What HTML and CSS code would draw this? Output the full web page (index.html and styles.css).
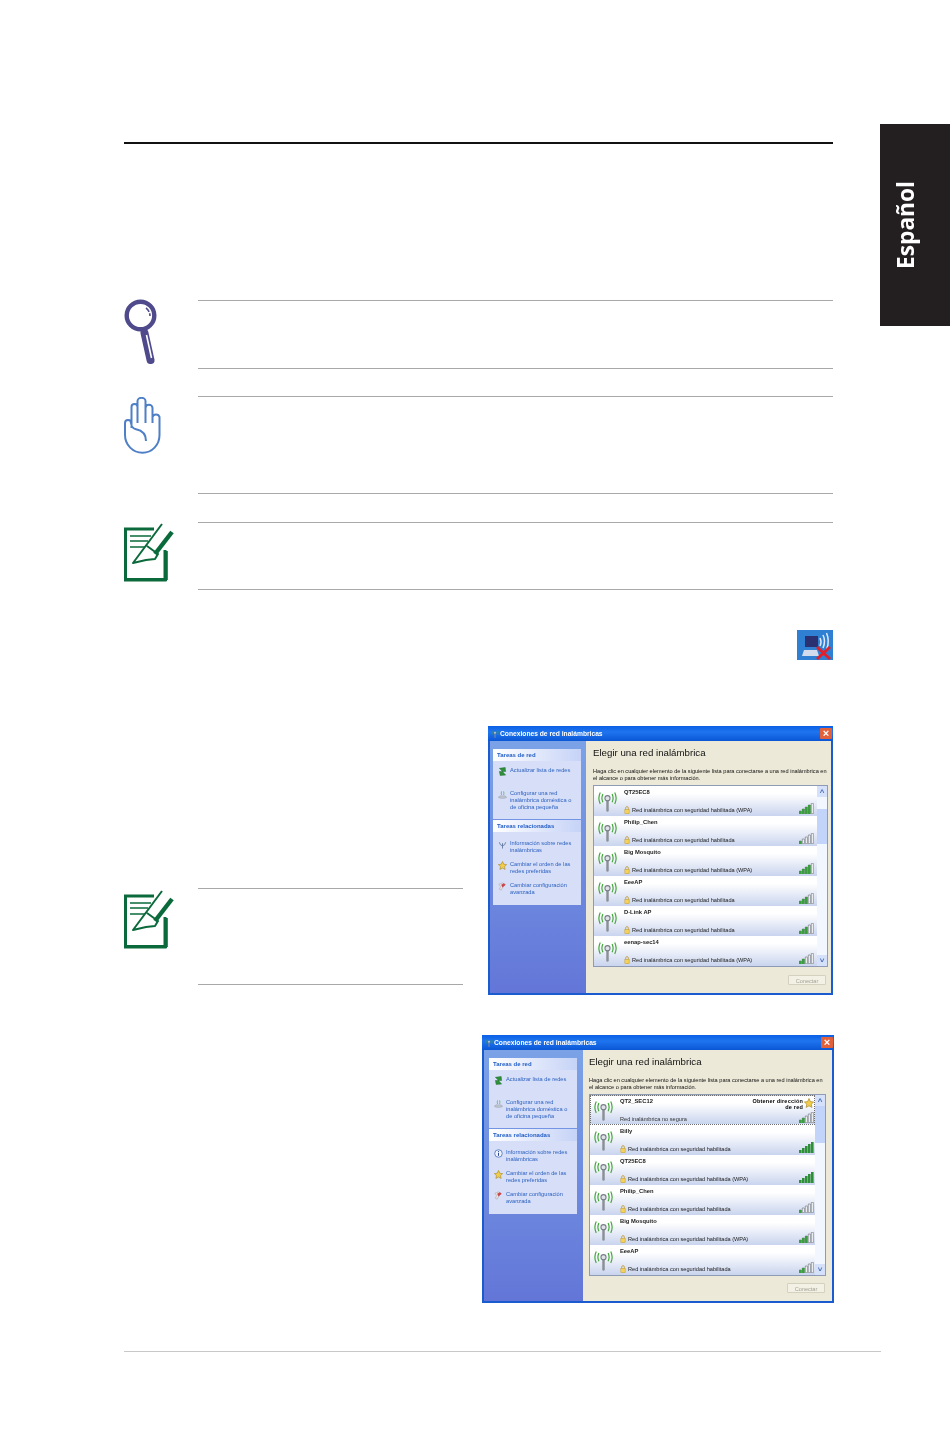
FILE: index.html
```html
<!DOCTYPE html>
<html lang="es">
<head>
    <meta charset="UTF-8">
    <meta name="viewport" content="width=device-width, initial-scale=1.0">
    <title>Conexiones de red inalámbricas</title>
    <link rel="stylesheet" href="styles.css">
</head>
<body>
    <!-- shared little icons -->
    <svg class="defs" width="0" height="0" aria-hidden="true">
        <symbol id="antenna" viewBox="0 0 20 22">
            <path d="M10 8V20.5" fill="none" stroke="#8b9097" stroke-width="2.6" stroke-linecap="round"/>
            <circle cx="10" cy="7.5" r="2.7" fill="#dfe3e8" stroke="#777d85" stroke-width="1.1"/>
            <path d="M5.2 3.2Q3 7.5 5.2 11.8M2.4 1.5Q-.6 7.5 2.4 13.5M14.8 3.2Q17 7.5 14.8 11.8M17.6 1.5Q20.6 7.5 17.6 13.5" fill="none" stroke="#3fa535" stroke-width="1.2"/>
        </symbol>
        <symbol id="lock" viewBox="0 0 6 9">
            <path d="M1.5 4V2.2a1.5 1.5 0 0 1 3 0V4" fill="none" stroke="#c09a35" stroke-width=".9"/>
            <rect x=".6" y="3.8" width="4.8" height="4.8" fill="#f5d35a" stroke="#c09a35" stroke-width=".6"/>
        </symbol>
        <symbol id="bars" viewBox="0 0 15 11">
            <path d="M.3 8h2v2.7h-2zM3.3 6h2v4.7h-2zM6.3 4h2v6.7h-2zM9.3 2h2v8.700h-2zM12.3.3h2v10.4h-2z" fill="#fff" stroke="#777d84" stroke-width=".7"/>
        </symbol>
        <symbol id="sig1" viewBox="0 0 15 11"><use href="#bars"/><path d="M0 8h2.6v3H0z" fill="#3c9c40"/></symbol>
        <symbol id="sig2" viewBox="0 0 15 11"><use href="#bars"/><path d="M0 8h2.6v3H0zM3 6h2.6v5H3z" fill="#3c9c40"/></symbol>
        <symbol id="sig3" viewBox="0 0 15 11"><use href="#bars"/><path d="M0 8h2.6v3H0zM3 6h2.6v5H3zM6 4h2.6v7H6z" fill="#3c9c40"/></symbol>
        <symbol id="sig4" viewBox="0 0 15 11"><use href="#bars"/><path d="M0 8h2.6v3H0zM3 6h2.6v5H3zM6 4h2.6v7H6zM9 2h2.6v9H9z" fill="#3c9c40"/></symbol>
        <symbol id="sig5" viewBox="0 0 15 11"><path d="M0 8h2.6v3H0zM3 6h2.6v5H3zM6 4h2.6v7H6zM9 2h2.6v9H9zM12 0h2.6v11H12z" fill="#2f8f38"/></symbol>
        <symbol id="star" viewBox="0 0 10 10">
            <path d="M5 .5 6.4 3.6 9.6 4 7.2 6.2 7.9 9.4 5 7.8 2.1 9.4 2.8 6.2.4 4 3.6 3.6z" fill="#f3cd4a" stroke="#a98a2b" stroke-width=".7"/>
        </symbol>
        <symbol id="refresh" viewBox="0 0 9 10">
            <path d="M1 1.5 7.5 .5 8 5 4.5 5 8 9 2 9.5 1 5 4.5 5z" fill="#2f8f3a" stroke="#1d6a2a" stroke-width=".5"/>
        </symbol>
        <symbol id="setup" viewBox="0 0 10 10">
            <path d="M.5 8.2C3 9.6 7 9.6 9.5 8.2L8 6.6H2z" fill="#c7ccd4" stroke="#7d8794" stroke-width=".5"/>
            <path d="M4 1.5Q3.2 3.5 4 5.5M6.2 1.5Q7 3.5 6.2 5.5" fill="none" stroke="#4da045" stroke-width=".7"/>
        </symbol>
        <symbol id="signal-info" viewBox="0 0 10 10">
            <path d="M5 3.5V9.5M1.5 2.5Q2 6 5 6.5Q8 6 8.5 2.5" fill="none" stroke="#5a6f96" stroke-width=".9"/>
        </symbol>
        <symbol id="info" viewBox="0 0 10 10">
            <circle cx="5" cy="5" r="4.2" fill="#eef3ff" stroke="#4a70b8" stroke-width=".9"/>
            <path d="M5 4.2V7.6M5 2.2V3.2" stroke="#23468f" stroke-width="1.1"/>
        </symbol>
        <symbol id="tools" viewBox="0 0 10 10">
            <path d="M1 2.5 5 1 8 3 5.5 5.5 3.5 9 1.5 8 3 5z" fill="#ebe6e4" stroke="#9a8f96" stroke-width=".5"/>
            <path d="M3.5 3 6.5 1.5 8.5 3 5 6z" fill="#c8484f"/>
        </symbol>
        <symbol id="doc-pen" viewBox="0 0 50 60">
            <path d="M41 27V57H1.500V6H30" fill="none" stroke="#0b6a3b" stroke-width="3"/>
            <path d="M42 28V57" stroke="#0b6a3b" stroke-width="3.600"/>
            <path d="M2 56.500H43" stroke="#0b6a3b" stroke-width="3"/>
            <path d="M6 13H27M6 18H24M6 24H21" stroke="#0b6a3b" stroke-width="1.300" fill="none"/>
            <path d="M38 1 9 40 22 37 31 36 34 31 23 23" fill="none" stroke="#0b6a3b" stroke-width="2" stroke-linejoin="round"/>
            <path d="M48 9 31 31" stroke="#0b6a3b" stroke-width="4.400"/>
        </symbol>
    </svg>

    <div class="tab"><span class="tab-label">Español</span></div>

    <div class="page">
        <hr class="top-rule">

        <div class="note note-first">
            <svg class="note-icon icon-loupe" viewBox="0 0 33 66">
                <circle cx="16.500" cy="16.500" r="13.800" fill="none" stroke="#4f4a8b" stroke-width="4.400"/>
                <path d="M22 9A10 10 0 0 1 26 17" fill="none" stroke="#4f4a8b" stroke-width="1.600" stroke-dasharray="5 1.400"/>
                <path d="M20.500 34 26.500 61" stroke="#4f4a8b" stroke-width="8" stroke-linecap="round"/>
                <path d="M22.500 36 27.500 59" stroke="#fff" stroke-width="1.600"/>
            </svg>
            <div class="note-body body-sm"></div>
        </div>

        <div class="note note-next">
            <svg class="note-icon icon-hand" viewBox="0 0 37 57">
                <path d="M7.500 31V10a3 3 0 0 1 6 0V4a4 3.200 0 0 1 8 0V11a3.400 3.200 0 0 1 7 0V20a3.600 3.400 0 0 1 7 0V38C35.500 48 28 55.800 18.500 55.800S1 48 1 38V26a3 3 0 0 1 6 0c.5 4 1.500 5.600 5 6.300 6 1.200 10 4.700 10 11.700M13.500 10V26M21.500 8V26M28.500 14V26" fill="none" stroke="#4f7fc6" stroke-width="2" stroke-linejoin="round"/>
            </svg>
            <div class="note-body body-lg"></div>
        </div>

        <div class="note note-last">
            <svg class="note-icon icon-doc"><use href="#doc-pen"/></svg>
            <div class="note-body body-last"></div>
        </div>

        <div class="tray-row">
            <svg class="tray-icon" width="36" height="30" viewBox="0 0 36 30">
                <rect width="36" height="30" fill="#2f80d2"/>
                <rect x="8" y="6" width="13" height="11" fill="#2b3170"/>
                <path d="M7 20H20L22 26H5z" fill="#d3dcec"/>
                <path d="M23 8Q25 12 23 16M26 5Q29 11 26 18M29.500 3Q33 11 29.500 20" fill="none" stroke="#dfe8fa" stroke-width="1.500"/>
                <path d="M20 17 33 29M33 17 20 29" stroke="#e0202a" stroke-width="2.800"/>
            </svg>
        </div>

        <div class="setup-row setup-row-first">
            <div class="setup-side">
                <div class="note">
                    <svg class="note-icon icon-doc icon-doc-low"><use href="#doc-pen"/></svg>
                    <div class="note-body body-side"></div>
                </div>
            </div>

            <div class="win win-a">
                <div class="win-title">
                    <svg class="win-logo" width="10" height="8"><use href="#antenna"/></svg>
                    <span>Conexiones de red inalámbricas</span>
                    <span class="win-close">×</span>
                </div>
                <div class="win-inner">
                    <div class="side">
                        <div class="panel">
                            <div class="panel-head">Tareas de red</div>
                            <div class="panel-list panel-list-wide">
                                <div class="task"><svg class="task-icon"><use href="#refresh"/></svg><span>Actualizar lista de redes</span></div>
                                <div class="task"><svg class="task-icon"><use href="#setup"/></svg><span>Configurar una red inalámbrica doméstica o de oficina pequeña</span></div>
                            </div>
                        </div>
                        <div class="panel">
                            <div class="panel-head">Tareas relacionadas</div>
                            <div class="panel-list">
                                <div class="task"><svg class="task-icon"><use href="#signal-info"/></svg><span>Información sobre redes inalámbricas</span></div>
                                <div class="task"><svg class="task-icon"><use href="#star"/></svg><span>Cambiar el orden de las redes preferidas</span></div>
                                <div class="task"><svg class="task-icon"><use href="#tools"/></svg><span>Cambiar configuración avanzada</span></div>
                            </div>
                        </div>
                    </div>
                    <div class="main">
                        <h2 class="main-title">Elegir una red inalámbrica</h2>
                        <p class="main-intro">Haga clic en cualquier elemento de la siguiente lista para conectarse a una red inalámbrica en el alcance o para obtener más información.</p>
                        <div class="list">
                            <div class="rows">
                                <div class="row">
                                    <svg class="row-antenna"><use href="#antenna"/></svg>
                                    <div class="row-text"><b>QT25EC8</b><span class="row-desc"><svg class="row-lock"><use href="#lock"/></svg>Red inalámbrica con seguridad habilitada (WPA)</span></div>
                                    <div class="row-side"><svg class="row-signal"><use href="#sig4"/></svg></div>
                                </div>
                                <div class="row">
                                    <svg class="row-antenna"><use href="#antenna"/></svg>
                                    <div class="row-text"><b>Philip_Chen</b><span class="row-desc"><svg class="row-lock"><use href="#lock"/></svg>Red inalámbrica con seguridad habilitada</span></div>
                                    <div class="row-side"><svg class="row-signal"><use href="#sig1"/></svg></div>
                                </div>
                                <div class="row">
                                    <svg class="row-antenna"><use href="#antenna"/></svg>
                                    <div class="row-text"><b>Big Mosquito</b><span class="row-desc"><svg class="row-lock"><use href="#lock"/></svg>Red inalámbrica con seguridad habilitada (WPA)</span></div>
                                    <div class="row-side"><svg class="row-signal"><use href="#sig4"/></svg></div>
                                </div>
                                <div class="row">
                                    <svg class="row-antenna"><use href="#antenna"/></svg>
                                    <div class="row-text"><b>EeeAP</b><span class="row-desc"><svg class="row-lock"><use href="#lock"/></svg>Red inalámbrica con seguridad habilitada</span></div>
                                    <div class="row-side"><svg class="row-signal"><use href="#sig3"/></svg></div>
                                </div>
                                <div class="row">
                                    <svg class="row-antenna"><use href="#antenna"/></svg>
                                    <div class="row-text"><b>D-Link AP</b><span class="row-desc"><svg class="row-lock"><use href="#lock"/></svg>Red inalámbrica con seguridad habilitada</span></div>
                                    <div class="row-side"><svg class="row-signal"><use href="#sig3"/></svg></div>
                                </div>
                                <div class="row">
                                    <svg class="row-antenna"><use href="#antenna"/></svg>
                                    <div class="row-text"><b>eenap-sec14</b><span class="row-desc"><svg class="row-lock"><use href="#lock"/></svg>Red inalámbrica con seguridad habilitada (WPA)</span></div>
                                    <div class="row-side"><svg class="row-signal"><use href="#sig2"/></svg></div>
                                </div>
                            </div>
                            <div class="scroll">
                                <span class="scroll-btn">˄</span>
                                <span class="scroll-thumb scroll-thumb-a"></span>
                                <span class="scroll-btn scroll-btn-end">˅</span>
                            </div>
                        </div>
                        <div class="main-foot"><span class="connect">Conectar</span></div>
                    </div>
                </div>
            </div>
        </div>

        <div class="setup-row setup-row-second">
            <div class="win win-b">
                <div class="win-title">
                    <svg class="win-logo" width="10" height="8"><use href="#antenna"/></svg>
                    <span>Conexiones de red inalámbricas</span>
                    <span class="win-close">×</span>
                </div>
                <div class="win-inner">
                    <div class="side">
                        <div class="panel">
                            <div class="panel-head">Tareas de red</div>
                            <div class="panel-list panel-list-wide">
                                <div class="task"><svg class="task-icon"><use href="#refresh"/></svg><span>Actualizar lista de redes</span></div>
                                <div class="task"><svg class="task-icon"><use href="#setup"/></svg><span>Configurar una red inalámbrica doméstica o de oficina pequeña</span></div>
                            </div>
                        </div>
                        <div class="panel">
                            <div class="panel-head">Tareas relacionadas</div>
                            <div class="panel-list">
                                <div class="task"><svg class="task-icon"><use href="#info"/></svg><span>Información sobre redes inalámbricas</span></div>
                                <div class="task"><svg class="task-icon"><use href="#star"/></svg><span>Cambiar el orden de las redes preferidas</span></div>
                                <div class="task"><svg class="task-icon"><use href="#tools"/></svg><span>Cambiar configuración avanzada</span></div>
                            </div>
                        </div>
                    </div>
                    <div class="main">
                        <h2 class="main-title">Elegir una red inalámbrica</h2>
                        <p class="main-intro">Haga clic en cualquier elemento de la siguiente lista para conectarse a una red inalámbrica en el alcance o para obtener más información.</p>
                        <div class="list">
                            <div class="rows">
                                <div class="row row-selected">
                                    <svg class="row-antenna"><use href="#antenna"/></svg>
                                    <div class="row-text"><b>QT2_SEC12</b><span class="row-desc row-desc-open">Red inalámbrica no segura</span></div>
                                    <div class="row-side">
                                        <div class="row-status"><b>Obtener dirección de red</b><svg class="row-star"><use href="#star"/></svg></div>
                                        <svg class="row-signal"><use href="#sig2"/></svg>
                                    </div>
                                </div>
                                <div class="row">
                                    <svg class="row-antenna"><use href="#antenna"/></svg>
                                    <div class="row-text"><b>Billy</b><span class="row-desc"><svg class="row-lock"><use href="#lock"/></svg>Red inalámbrica con seguridad habilitada</span></div>
                                    <div class="row-side"><svg class="row-signal"><use href="#sig5"/></svg></div>
                                </div>
                                <div class="row">
                                    <svg class="row-antenna"><use href="#antenna"/></svg>
                                    <div class="row-text"><b>QT25EC8</b><span class="row-desc"><svg class="row-lock"><use href="#lock"/></svg>Red inalámbrica con seguridad habilitada (WPA)</span></div>
                                    <div class="row-side"><svg class="row-signal"><use href="#sig5"/></svg></div>
                                </div>
                                <div class="row">
                                    <svg class="row-antenna"><use href="#antenna"/></svg>
                                    <div class="row-text"><b>Philip_Chen</b><span class="row-desc"><svg class="row-lock"><use href="#lock"/></svg>Red inalámbrica con seguridad habilitada</span></div>
                                    <div class="row-side"><svg class="row-signal"><use href="#sig1"/></svg></div>
                                </div>
                                <div class="row">
                                    <svg class="row-antenna"><use href="#antenna"/></svg>
                                    <div class="row-text"><b>Big Mosquito</b><span class="row-desc"><svg class="row-lock"><use href="#lock"/></svg>Red inalámbrica con seguridad habilitada (WPA)</span></div>
                                    <div class="row-side"><svg class="row-signal"><use href="#sig3"/></svg></div>
                                </div>
                                <div class="row">
                                    <svg class="row-antenna"><use href="#antenna"/></svg>
                                    <div class="row-text"><b>EeeAP</b><span class="row-desc"><svg class="row-lock"><use href="#lock"/></svg>Red inalámbrica con seguridad habilitada</span></div>
                                    <div class="row-side"><svg class="row-signal"><use href="#sig2"/></svg></div>
                                </div>
                            </div>
                            <div class="scroll">
                                <span class="scroll-btn">˄</span>
                                <span class="scroll-thumb scroll-thumb-b"></span>
                                <span class="scroll-btn scroll-btn-end">˅</span>
                            </div>
                        </div>
                        <div class="main-foot"><span class="connect">Conectar</span></div>
                    </div>
                </div>
            </div>
        </div>

        <div class="foot-rule"></div>
    </div>
</body>
</html>
```
FILE: styles.css
```css
body {
    margin: 0;
    background-color: #fff;
    font-family: "Liberation Sans", Arial, sans-serif;
    color: #000;
}

.defs {
    display: block;
    height: 0;
}

.tab {
    position: absolute;
    top: 124px;
    right: 0;
    width: 70px;
    height: 202px;
    background-color: #231f20;
    display: flex;
    align-items: center;
    padding-left: 14px;
    box-sizing: border-box;
}

.tab-label {
    writing-mode: vertical-rl;
    transform: rotate(180deg);
    font-family: "Open Sans", sans-serif;
    font-weight: 700;
    font-size: 22.7px;
    line-height: 24px;
    color: #fff;
}

.page {
    padding: 142px 0 0 124px;
    width: 709px;
}

.top-rule {
    margin: 0;
    border: none;
    height: 2px;
    background-color: #111;
}

/* note blocks: icon on the left, ruled box on the right */
.note {
    display: flex;
}

.note-first {
    margin-top: 156px;
}

.note-next {
    margin-top: 27px;
}

.note-last {
    margin-top: 28px;
}

.note-icon {
    flex: none;
}

.icon-loupe {
    width: 33px;
    height: 66px;
    margin: -1px 41px 0 0;
}

.icon-hand {
    width: 37px;
    height: 57px;
    margin: 1px 37px 0 0;
}

.icon-doc {
    width: 50px;
    height: 60px;
    margin: 1px 24px 0 0;
}

.icon-doc-low {
    margin-top: 2px;
}

.note-body {
    flex: 1;
    border-top: 1px solid #a8a8a8;
    border-bottom: 1px solid #a8a8a8;
}

.body-sm {
    height: 67px;
}

.body-lg {
    height: 96px;
}

.body-last {
    height: 66px;
}

.body-side {
    height: 95px;
}

.tray-row {
    display: flex;
    justify-content: flex-end;
    margin-top: 40px;
}

.tray-icon {
    display: block;
}

.setup-row {
    display: flex;
    justify-content: space-between;
}

.setup-row-first {
    margin-top: 66px;
}

.setup-row-second {
    margin-top: 40px;
    justify-content: flex-end;
}

.setup-side {
    width: 339px;
    padding-top: 162px;
}

.foot-rule {
    margin-top: 48px;
    width: 757px;
    height: 1px;
    background-color: #c8c8c8;
}

/* XP style window */
.win {
    display: flex;
    flex-direction: column;
    box-sizing: border-box;
    background-color: #1a5cd0;
    padding: 0 2px 2px;
    filter: blur(.4px);
}

.win-a {
    width: 345px;
    height: 269px;
}

.win-b {
    width: 352px;
    height: 268px;
    margin-right: -1px;
}

.win-title {
    height: 15px;
    flex: none;
    display: flex;
    align-items: center;
    margin: 0 -2px;
    padding: 0 1px 0 2px;
    background: linear-gradient(#0a5fe6, #1f74ee 40%, #0b57d6);
    color: #fff;
    font-weight: 700;
    font-size: 6.7px;
}

.win-logo {
    flex: none;
}

.win-close {
    margin-left: auto;
    width: 12px;
    height: 11px;
    line-height: 10px;
    text-align: center;
    border-radius: 1px;
    font-size: 11px;
    background-color: #e2603a;
}

.win-inner {
    flex: 1;
    display: flex;
    min-height: 0;
    background-color: #ece9d8;
}

.side {
    width: 96px;
    flex: none;
    box-sizing: border-box;
    padding: 8px 5px 0 3px;
    background: linear-gradient(#7ba2e7, #6376d8);
    display: flex;
    flex-direction: column;
    gap: 1px;
}

.win-b .side {
    width: 99px;
    padding: 8px 6px 0 5px;
}

.panel {
    background-color: #d6dff7;
}

.panel-head {
    height: 12px;
    line-height: 12px;
    padding-left: 4px;
    font-size: 6px;
    font-weight: 700;
    color: #215dc6;
    background: linear-gradient(90deg, #fff, #c6d3f7);
}

.panel-list {
    display: flex;
    flex-direction: column;
    gap: 7px;
    padding: 8px 4px 9px 5px;
}

.panel-list-wide {
    gap: 14px;
    padding: 6px 4px 8px 5px;
}

.task {
    display: flex;
    gap: 3px;
    font-size: 5.7px;
    line-height: 7px;
    color: #2b5fc0;
}

.task-icon {
    width: 9px;
    height: 9px;
    flex: none;
}

.main {
    flex: 1;
    min-width: 0;
    display: flex;
    flex-direction: column;
    padding: 6px 3px 0 7px;
}

.win-b .main {
    padding: 6px 6px 0 6px;
}

.main-title {
    margin: 0;
    font-size: 9.7px;
    line-height: 12px;
    font-weight: 400;
    color: #111;
}

.main-intro {
    margin: 9px 0 3px;
    font-size: 5.6px;
    line-height: 7px;
    height: 14px;
    color: #111;
}

.list {
    flex: 1;
    min-height: 0;
    display: flex;
    background-color: #fff;
    border: 1px solid #8f9ab5;
    box-sizing: border-box;
}

.rows {
    flex: 1;
    min-width: 0;
    display: flex;
    flex-direction: column;
}

.row {
    flex: 1;
    display: flex;
    box-sizing: border-box;
    padding: 3px 3px 2px 4px;
    background: linear-gradient(#fff 25%, #c9d4ee);
}

.win-b .row {
    padding-right: 1px;
}

.row-selected {
    border: 1px dotted #6f6f6f;
    padding: 2px 2px 1px 3px;
}

.win-b .row-selected {
    padding-right: 0;
}

.row-antenna {
    width: 19px;
    height: 21px;
    flex: none;
    margin: 2px 7px 0 0;
}

.row-text {
    flex: 1;
    min-width: 0;
    display: flex;
    flex-direction: column;
    justify-content: space-between;
    font-size: 5.6px;
    line-height: 7px;
    color: #222;
}

.row-text b {
    font-size: 5.8px;
}

.row-desc {
    display: flex;
    align-items: center;
    gap: 2px;
    white-space: nowrap;
}

.row-desc-open {
    color: #333;
}

.row-lock {
    width: 6px;
    height: 8px;
    flex: none;
}

.row-side {
    display: flex;
    flex-direction: column;
    align-items: flex-end;
    justify-content: flex-end;
    flex: none;
}

.row-selected .row-side {
    justify-content: space-between;
}

.row-signal {
    width: 15px;
    height: 11px;
}

.row-status {
    display: flex;
    gap: 1px;
    width: 66px;
    text-align: right;
    font-size: 5.5px;
    line-height: 6px;
    letter-spacing: .2px;
}

.row-status b {
    flex: 1;
}

.row-star {
    width: 10px;
    height: 10px;
    flex: none;
}

.scroll {
    width: 10px;
    flex: none;
    display: flex;
    flex-direction: column;
    background-color: #f2f6ff;
}

.scroll-btn {
    height: 11px;
    line-height: 11px;
    text-align: center;
    font-size: 8px;
    font-weight: 700;
    color: #4a6fb5;
    background-color: #d5e1fb;
}

.scroll-btn-end {
    margin-top: auto;
}

.scroll-thumb {
    margin-top: 12px;
    height: 35px;
    background-color: #c3d4fb;
}

.scroll-thumb-b {
    margin-top: 0;
    height: 37px;
}

.main-foot {
    display: flex;
    justify-content: flex-end;
    padding: 8px 2px 8px 0;
}

.win-b .main-foot {
    padding: 7px 1px 8px 0;
}

.connect {
    width: 38px;
    height: 10px;
    line-height: 10px;
    text-align: center;
    font-size: 5.6px;
    color: #a3a294;
    background-color: #f3f1e6;
    border: 1px solid #d4d1bf;
    border-radius: 1px;
    box-sizing: border-box;
}
```
